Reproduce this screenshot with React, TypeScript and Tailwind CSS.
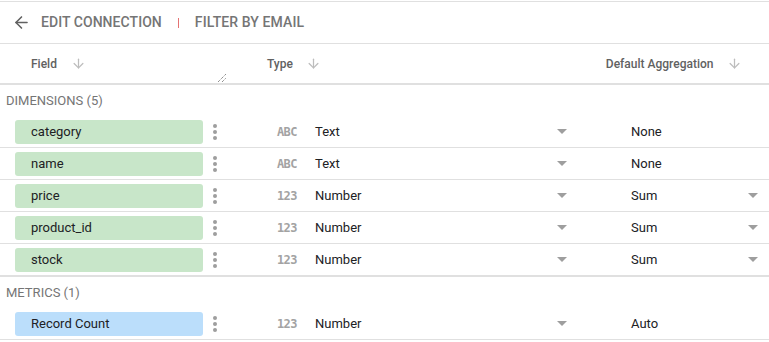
import { ArrowDown, ArrowLeft } from "lucide-react";

type Field = {
    name: string;
    kind: "ABC" | "123";
    type: string;
    agg: string;
    aggMenu: boolean;
    metric?: boolean;
};

const dimensions: Field[] = [
    { name: "category", kind: "ABC", type: "Text", agg: "None", aggMenu: false },
    { name: "name", kind: "ABC", type: "Text", agg: "None", aggMenu: false },
    { name: "price", kind: "123", type: "Number", agg: "Sum", aggMenu: true },
    { name: "product_id", kind: "123", type: "Number", agg: "Sum", aggMenu: true },
    { name: "stock", kind: "123", type: "Number", agg: "Sum", aggMenu: true },
];

const metrics: Field[] = [
    { name: "Record Count", kind: "123", type: "Number", agg: "Auto", aggMenu: false, metric: true },
];

function Caret() {
    return (
        <svg width="10" height="5" viewBox="0 0 10 5" className="shrink-0">
            <path d="M0 0h10L5 5z" fill="#9e9e9e" />
        </svg>
    );
}

function Kebab() {
    return (
        <div className="flex w-6 shrink-0 flex-col items-center gap-[2px]">
            <span className="h-1 w-1 rounded-full bg-[#9e9e9e]" />
            <span className="h-1 w-1 rounded-full bg-[#9e9e9e]" />
            <span className="h-1 w-1 rounded-full bg-[#9e9e9e]" />
        </div>
    );
}

function FieldRow({ field, last }: { field: Field; last?: boolean }) {
    return (
        <div
            className={`flex items-center pl-[15px] ${
                last ? "h-[33px] border-b-2 border-[#e0e0e0]" : "h-[32px] border-b border-[#e0e0e0]"
            }`}
        >
            <div
                className={`flex h-6 w-[188px] shrink-0 items-center rounded-[3px] pl-4 text-[13px] text-[#202124] ${
                    field.metric ? "bg-[#bbdefb]" : "bg-[#c8e6c9]"
                }`}
            >
                {field.name}
            </div>
            <Kebab />
            <div className="ml-[50px] w-[38px] shrink-0 font-['DejaVu_Sans_Mono',monospace] text-[12px] font-bold leading-none tracking-[-0.6px] text-[#a3a3a3]">
                {field.kind}
            </div>
            <div className="w-[242px] shrink-0 text-[13px] text-[#202124]">{field.type}</div>
            <Caret />
            <div className="ml-[64px] w-[117px] shrink-0 text-[13px] text-[#202124]">{field.agg}</div>
            {field.aggMenu && <Caret />}
        </div>
    );
}

function SectionLabel({ children }: { children: string }) {
    return (
        <div className="flex h-[31px] items-center pl-[6px] text-[13px] text-[#757575]">{children}</div>
    );
}

export default function App() {
    return (
        <div className="w-[769px] bg-white pt-px font-['Roboto',sans-serif]">
            <div className="flex h-[43px] items-center border-y border-[#e0e0e0] pl-[12px]">
                <ArrowLeft className="h-[19px] w-[19px] text-[#616161]" strokeWidth={2} />
                <span className="ml-[10px] text-[14px] font-medium tracking-[0.05px] text-[#757575]">
                    EDIT CONNECTION
                </span>
                <span className="ml-[16px] h-[10px] w-px bg-[#e57373]" />
                <span className="ml-[16px] text-[14px] font-medium tracking-[0.1px] text-[#757575]">
                    FILTER BY EMAIL
                </span>
            </div>

            <div className="relative flex h-[41px] items-center border-b-2 border-[#e0e0e0] text-[12px] font-medium text-[#616161]">
                <span className="ml-[31px]">Field</span>
                <ArrowDown className="ml-[14px] h-[15px] w-[15px] text-[#bdbdbd]" strokeWidth={2} />
                <svg width="9" height="8" viewBox="0 0 9 8" className="absolute left-[218px] top-[30px]">
                    <path d="M0 8L8 0M4 8L8 4" stroke="#616161" strokeWidth="1" strokeDasharray="1 1" />
                </svg>
                <span className="ml-[181px]">Type</span>
                <ArrowDown className="ml-[13px] h-[15px] w-[15px] text-[#bdbdbd]" strokeWidth={2} />
                <span className="ml-[285px]">Default Aggregation</span>
                <ArrowDown className="ml-[14px] h-[15px] w-[15px] text-[#bdbdbd]" strokeWidth={2} />
            </div>

            <SectionLabel>DIMENSIONS (5)</SectionLabel>
            {dimensions.map((f, i) => (
                <FieldRow key={f.name} field={f} last={i === dimensions.length - 1} />
            ))}

            <SectionLabel>METRICS (1)</SectionLabel>
            {metrics.map((f) => (
                <FieldRow key={f.name} field={f} />
            ))}
        </div>
    );
}
